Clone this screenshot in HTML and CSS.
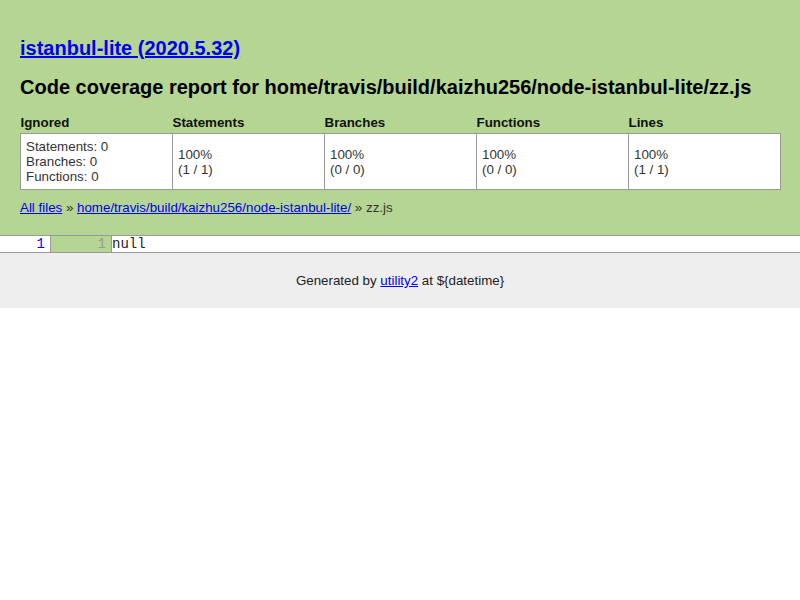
FILE: index.html
```html
<!DOCTYPE html>
<html>
<head>
<meta charset="utf-8">
<title>istanbul-lite</title>
<link rel="stylesheet" href="styles.css">
</head>
<body>
<div class="header">
  <h1><a href="#">istanbul-lite (2020.5.32)</a></h1>
  <h2>Code coverage report for home/travis/build/kaizhu256/node-istanbul-lite/zz.js</h2>
  <table class="summary">
    <thead>
      <tr><th>Ignored</th><th>Statements</th><th>Branches</th><th>Functions</th><th>Lines</th></tr>
    </thead>
    <tbody>
      <tr>
        <td>Statements: 0<br>Branches: 0<br>Functions: 0</td>
        <td>100%<br>(1 / 1)</td>
        <td>100%<br>(0 / 0)</td>
        <td>100%<br>(0 / 0)</td>
        <td>100%<br>(1 / 1)</td>
      </tr>
    </tbody>
  </table>
  <div class="crumbs"><a href="#">All files</a> » <a href="#">home/travis/build/kaizhu256/node-istanbul-lite/</a> » zz.js</div>
</div>
<table class="code">
  <tr>
    <td class="lineno">1</td>
    <td class="count">1</td>
    <td class="src">null</td>
  </tr>
</table>
<div class="footer">Generated by <a href="#">utility2</a> at ${datetime}</div>
</body>
</html>
```
FILE: styles.css
```css
html, body {
  margin: 0;
  padding: 0;
  background: #fff;
  font-family: "Liberation Sans", Arial, sans-serif;
  font-size: 13.333px;
  line-height: 15px;
  color: #333;
}
a { color: #0000ee; }
.header {
  background: #b5d592;
  padding: 36px 20px 20px;
}
.header h1 {
  margin: 0;
  font-size: 20px;
  line-height: 24px;
  font-weight: bold;
}
.header h2 {
  margin: 15px 0 16px;
  font-size: 20px;
  line-height: 24px;
  font-weight: bold;
  color: #000;
}
.summary {
  width: 761px;
  border-collapse: collapse;
  table-layout: fixed;
}
.summary th {
  text-align: left;
  padding: 0 0 3px;
  line-height: 15px;
  color: #111;
}
.summary td {
  background: #fff;
  border: 1px solid #999;
  padding: 5px;
  vertical-align: middle;
}
.crumbs {
  margin-top: 10px;
}
.code {
  width: 100%;
  border-collapse: collapse;
  border-top: 1px solid #999;
  border-bottom: 1px solid #999;
  font-family: "Liberation Mono", "Courier New", monospace;
  font-size: 14px;
  line-height: 15px;
}
.code td { padding: 1px 0 0; height: 15px; line-height: 15px; vertical-align: top; }
.lineno {
  width: 45px;
  padding-right: 5px !important;
  text-align: right;
  color: #0000ee;
  border-right: 1px solid #999;
}
.count {
  width: 55px;
  padding-right: 5px !important;
  text-align: right;
  color: #999;
  background: #b5d592;
  border-right: 1px solid #999;
}
.src {
  color: #222;
}
.footer {
  background: #eee;
  padding: 20px;
  text-align: center;
  color: #222;
}
```
